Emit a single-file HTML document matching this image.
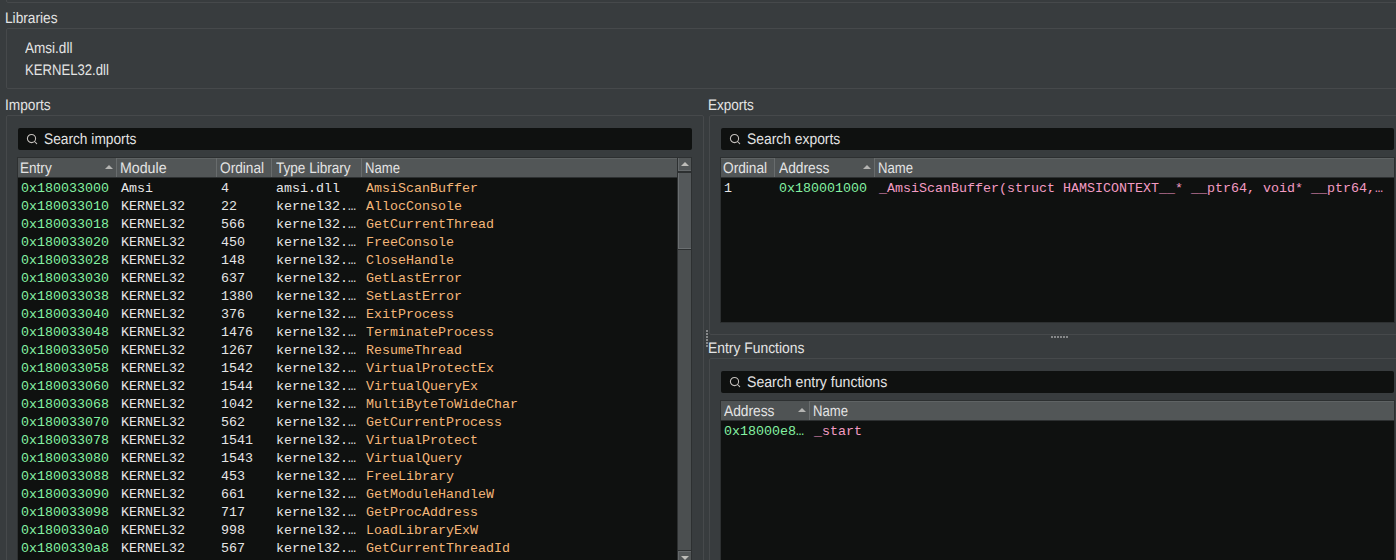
<!DOCTYPE html>
<html><head><meta charset="utf-8"><title>Triage</title>
<style>
html,body{margin:0;padding:0;}
body{width:1396px;height:560px;overflow:hidden;background:#383c3e;position:relative;
 font-family:"Liberation Sans",sans-serif;font-size:15.3px;color:#e4e4e4;}
div,span,b{position:absolute;box-sizing:border-box;white-space:pre;}
b{font-weight:normal;height:18px;line-height:18px;transform-origin:0 0;text-rendering:geometricPrecision;}
.gb{border:1px solid #46494b;border-radius:2px;}
.sb{background:#0f1110;border-radius:2px;height:22px;}
.sb svg{position:absolute;left:7px;top:4px;}
.hd{background:#525657;border-top:1px solid #5f6364;height:19px;}
.hc{top:-1px;height:19px;border-right:1px solid #686c6d;}
.hc.last{border-right:none;}
.hc i{position:absolute;right:3px;top:7px;width:0;height:0;border-left:4px solid transparent;border-right:4px solid transparent;border-bottom:4.5px solid #b4b4b2;}
.tb{background:#0f1110;overflow:hidden;}
.r{left:0;height:18px;width:100%;font-family:"Liberation Mono",monospace;font-size:13.33px;line-height:18px;}
.r span{top:0;height:18px;}
.g{color:#84f2a2;} .w{color:#e6e6e6;} .o{color:#f4b679;} .p{color:#f39bc3;}
.dot{width:2px;height:2px;background:#868889;}
</style></head>
<body>
<div class="gb" style="left:6px;top:-20px;width:1500px;height:23px"></div>
<b id="libs" style="left:5.23px;top:9.70px;transform:scaleX(0.8945)">Libraries</b>
<div class="gb" style="left:6px;top:28px;width:1500px;height:61px"></div>
<b id="amsi" style="left:25.13px;top:39.70px;transform:scaleX(0.8853)">Amsi.dll</b>
<b id="k32" style="left:25.27px;top:61.70px;transform:scaleX(0.8574)">KERNEL32.dll</b>
<b id="imp" style="left:4.81px;top:96.70px;transform:scaleX(0.8964)">Imports</b>
<div class="gb" style="left:6px;top:115px;width:698px;height:500px"></div>
<div class="sc" style="left:17px;top:157px;width:675px;height:420px;background:#2d3031"></div>
<div class="sb" style="left:18px;top:128px;width:674px"><svg width="14" height="14" viewBox="0 0 14 14"><circle cx="6.5" cy="6.5" r="4.1" fill="none" stroke="#c6c2be" stroke-width="1.05"/><path d="M9.5 9.5 L11.7 11.7" stroke="#c6c2be" stroke-width="1.05" stroke-linecap="round"/></svg></div>
<b id="s1" style="left:44.26px;top:130.70px;transform:scaleX(0.8977)">Search imports</b>
<div class="hd" style="left:18px;top:158px;width:659px"><div class="hc" style="left:0px;width:99px;background:#4f5354"><i></i></div><div class="hc" style="left:99px;width:100px"></div><div class="hc" style="left:199px;width:55px"></div><div class="hc" style="left:254px;width:90px"></div><div class="hc last" style="left:344px;width:315px"></div></div>
<b id="h_entry" style="left:20.15px;top:159.90px;transform:scaleX(0.8868)">Entry</b>
<b id="h_mod" style="left:119.89px;top:159.90px;transform:scaleX(0.9282)">Module</b>
<b id="h_ord" style="left:220.00px;top:159.90px;transform:scaleX(0.8945)">Ordinal</b>
<b id="h_tl" style="left:275.74px;top:159.90px;transform:scaleX(0.8870)">Type Library</b>
<b id="h_name" style="left:365.16px;top:159.90px;transform:scaleX(0.8566)">Name</b>
<div class="tb" style="left:18px;top:178px;width:674px;height:400px"><div class="r" style="top:2px"><span class="g" style="left:3px">0x180033000</span><span class="w" style="left:103px">Amsi</span><span class="w" style="left:203px">4</span><span class="w" style="left:258px">amsi.dll</span><span class="o" style="left:348px">AmsiScanBuffer</span></div>
<div class="r" style="top:20px"><span class="g" style="left:3px">0x180033010</span><span class="w" style="left:103px">KERNEL32</span><span class="w" style="left:203px">22</span><span class="w" style="left:258px">kernel32.…</span><span class="o" style="left:348px">AllocConsole</span></div>
<div class="r" style="top:38px"><span class="g" style="left:3px">0x180033018</span><span class="w" style="left:103px">KERNEL32</span><span class="w" style="left:203px">566</span><span class="w" style="left:258px">kernel32.…</span><span class="o" style="left:348px">GetCurrentThread</span></div>
<div class="r" style="top:56px"><span class="g" style="left:3px">0x180033020</span><span class="w" style="left:103px">KERNEL32</span><span class="w" style="left:203px">450</span><span class="w" style="left:258px">kernel32.…</span><span class="o" style="left:348px">FreeConsole</span></div>
<div class="r" style="top:74px"><span class="g" style="left:3px">0x180033028</span><span class="w" style="left:103px">KERNEL32</span><span class="w" style="left:203px">148</span><span class="w" style="left:258px">kernel32.…</span><span class="o" style="left:348px">CloseHandle</span></div>
<div class="r" style="top:92px"><span class="g" style="left:3px">0x180033030</span><span class="w" style="left:103px">KERNEL32</span><span class="w" style="left:203px">637</span><span class="w" style="left:258px">kernel32.…</span><span class="o" style="left:348px">GetLastError</span></div>
<div class="r" style="top:110px"><span class="g" style="left:3px">0x180033038</span><span class="w" style="left:103px">KERNEL32</span><span class="w" style="left:203px">1380</span><span class="w" style="left:258px">kernel32.…</span><span class="o" style="left:348px">SetLastError</span></div>
<div class="r" style="top:128px"><span class="g" style="left:3px">0x180033040</span><span class="w" style="left:103px">KERNEL32</span><span class="w" style="left:203px">376</span><span class="w" style="left:258px">kernel32.…</span><span class="o" style="left:348px">ExitProcess</span></div>
<div class="r" style="top:146px"><span class="g" style="left:3px">0x180033048</span><span class="w" style="left:103px">KERNEL32</span><span class="w" style="left:203px">1476</span><span class="w" style="left:258px">kernel32.…</span><span class="o" style="left:348px">TerminateProcess</span></div>
<div class="r" style="top:164px"><span class="g" style="left:3px">0x180033050</span><span class="w" style="left:103px">KERNEL32</span><span class="w" style="left:203px">1267</span><span class="w" style="left:258px">kernel32.…</span><span class="o" style="left:348px">ResumeThread</span></div>
<div class="r" style="top:182px"><span class="g" style="left:3px">0x180033058</span><span class="w" style="left:103px">KERNEL32</span><span class="w" style="left:203px">1542</span><span class="w" style="left:258px">kernel32.…</span><span class="o" style="left:348px">VirtualProtectEx</span></div>
<div class="r" style="top:200px"><span class="g" style="left:3px">0x180033060</span><span class="w" style="left:103px">KERNEL32</span><span class="w" style="left:203px">1544</span><span class="w" style="left:258px">kernel32.…</span><span class="o" style="left:348px">VirtualQueryEx</span></div>
<div class="r" style="top:218px"><span class="g" style="left:3px">0x180033068</span><span class="w" style="left:103px">KERNEL32</span><span class="w" style="left:203px">1042</span><span class="w" style="left:258px">kernel32.…</span><span class="o" style="left:348px">MultiByteToWideChar</span></div>
<div class="r" style="top:236px"><span class="g" style="left:3px">0x180033070</span><span class="w" style="left:103px">KERNEL32</span><span class="w" style="left:203px">562</span><span class="w" style="left:258px">kernel32.…</span><span class="o" style="left:348px">GetCurrentProcess</span></div>
<div class="r" style="top:254px"><span class="g" style="left:3px">0x180033078</span><span class="w" style="left:103px">KERNEL32</span><span class="w" style="left:203px">1541</span><span class="w" style="left:258px">kernel32.…</span><span class="o" style="left:348px">VirtualProtect</span></div>
<div class="r" style="top:272px"><span class="g" style="left:3px">0x180033080</span><span class="w" style="left:103px">KERNEL32</span><span class="w" style="left:203px">1543</span><span class="w" style="left:258px">kernel32.…</span><span class="o" style="left:348px">VirtualQuery</span></div>
<div class="r" style="top:290px"><span class="g" style="left:3px">0x180033088</span><span class="w" style="left:103px">KERNEL32</span><span class="w" style="left:203px">453</span><span class="w" style="left:258px">kernel32.…</span><span class="o" style="left:348px">FreeLibrary</span></div>
<div class="r" style="top:308px"><span class="g" style="left:3px">0x180033090</span><span class="w" style="left:103px">KERNEL32</span><span class="w" style="left:203px">661</span><span class="w" style="left:258px">kernel32.…</span><span class="o" style="left:348px">GetModuleHandleW</span></div>
<div class="r" style="top:326px"><span class="g" style="left:3px">0x180033098</span><span class="w" style="left:103px">KERNEL32</span><span class="w" style="left:203px">717</span><span class="w" style="left:258px">kernel32.…</span><span class="o" style="left:348px">GetProcAddress</span></div>
<div class="r" style="top:344px"><span class="g" style="left:3px">0x1800330a0</span><span class="w" style="left:103px">KERNEL32</span><span class="w" style="left:203px">998</span><span class="w" style="left:258px">kernel32.…</span><span class="o" style="left:348px">LoadLibraryExW</span></div>
<div class="r" style="top:362px"><span class="g" style="left:3px">0x1800330a8</span><span class="w" style="left:103px">KERNEL32</span><span class="w" style="left:203px">567</span><span class="w" style="left:258px">kernel32.…</span><span class="o" style="left:348px">GetCurrentThreadId</span></div>
</div>
<div class="sc" style="left:677px;top:158px;width:15px;height:402px;background:#2d3031"></div>
<div class="sc" style="left:678px;top:158px;width:13px;height:13px;background:#525657;border-left:1px solid #64686a;border-bottom:1px solid #64686a"><div style="left:1.75px;top:4px;width:0;height:0;border-left:4px solid transparent;border-right:4px solid transparent;border-bottom:4.5px solid #bebdb9"></div></div>
<div class="sc" style="left:678px;top:173px;width:13px;height:76px;background:#54585a;border-left:1px solid #6a6e70;border-bottom:1px solid #6a6e70"></div>
<div class="sc" style="left:678px;top:250px;width:13px;height:300px;background:#4b4f50"></div>
<div class="sc" style="left:678px;top:551px;width:13px;height:13px;background:#525657;border-left:1px solid #64686a;border-top:1px solid #64686a"><div style="left:1.75px;top:4px;width:0;height:0;border-left:4px solid transparent;border-right:4px solid transparent;border-top:4.5px solid #bebdb9"></div></div>
<b id="exp" style="left:707.94px;top:96.70px;transform:scaleX(0.8848)">Exports</b>
<div class="gb" style="left:709px;top:115px;width:800px;height:220px"></div>
<div class="sc" style="left:720px;top:157px;width:675px;height:166px;background:#2d3031"></div>
<div class="sb" style="left:721px;top:128px;width:673px"><svg width="14" height="14" viewBox="0 0 14 14"><circle cx="6.5" cy="6.5" r="4.1" fill="none" stroke="#c6c2be" stroke-width="1.05"/><path d="M9.5 9.5 L11.7 11.7" stroke="#c6c2be" stroke-width="1.05" stroke-linecap="round"/></svg></div>
<b id="s2" style="left:746.84px;top:130.70px;transform:scaleX(0.9065)">Search exports</b>
<div class="hd" style="left:721px;top:158px;width:673px"><div class="hc" style="left:0px;width:54px"></div><div class="hc" style="left:54px;width:100px;background:#4f5354"><i></i></div><div class="hc last" style="left:154px;width:519px"></div></div>
<b id="e_ord" style="left:723.00px;top:159.90px;transform:scaleX(0.8945)">Ordinal</b>
<b id="e_addr" style="left:778.50px;top:159.90px;transform:scaleX(0.8995)">Address</b>
<b id="e_name" style="left:878.16px;top:159.90px;transform:scaleX(0.8566)">Name</b>
<div class="tb" style="left:721px;top:178px;width:673px;height:144px"><div class="r" style="top:2px"><span class="w" style="left:3px">1</span><span class="g" style="left:58px">0x180001000</span><span class="p" style="left:158px">_AmsiScanBuffer(struct HAMSICONTEXT__* __ptr64, void* __ptr64,…</span></div></div>
<div class="dot" style="left:706px;top:330px"></div>
<div class="dot" style="left:706px;top:333px"></div>
<div class="dot" style="left:706px;top:336px"></div>
<div class="dot" style="left:706px;top:339px"></div>
<div class="dot" style="left:706px;top:342px"></div>
<div class="dot" style="left:706px;top:345px"></div>
<div class="dot" style="left:1051px;top:336px"></div>
<div class="dot" style="left:1054px;top:336px"></div>
<div class="dot" style="left:1057px;top:336px"></div>
<div class="dot" style="left:1060px;top:336px"></div>
<div class="dot" style="left:1063px;top:336px"></div>
<div class="dot" style="left:1066px;top:336px"></div>
<b id="ef" style="left:708.02px;top:339.70px;transform:scaleX(0.9073)">Entry Functions</b>
<div class="gb" style="left:709px;top:358px;width:800px;height:400px"></div>
<div class="sc" style="left:720px;top:400px;width:675px;height:200px;background:#2d3031"></div>
<div class="sb" style="left:721px;top:371px;width:673px"><svg width="14" height="14" viewBox="0 0 14 14"><circle cx="6.5" cy="6.5" r="4.1" fill="none" stroke="#c6c2be" stroke-width="1.05"/><path d="M9.5 9.5 L11.7 11.7" stroke="#c6c2be" stroke-width="1.05" stroke-linecap="round"/></svg></div>
<b id="s3" style="left:746.96px;top:373.70px;transform:scaleX(0.9213)">Search entry functions</b>
<div class="hd" style="left:721px;top:401px;width:673px"><div class="hc" style="left:0px;width:89px;background:#4f5354"><i></i></div><div class="hc last" style="left:89px;width:584px"></div></div>
<b id="f_addr" style="left:723.50px;top:402.90px;transform:scaleX(0.8995)">Address</b>
<b id="f_name" style="left:813.21px;top:402.90px;transform:scaleX(0.8568)">Name</b>
<div class="tb" style="left:721px;top:421px;width:673px;height:200px"><div class="r" style="top:2px"><span class="g" style="left:3px">0x18000e8…</span><span class="p" style="left:93px">_start</span></div></div>
</body></html>
